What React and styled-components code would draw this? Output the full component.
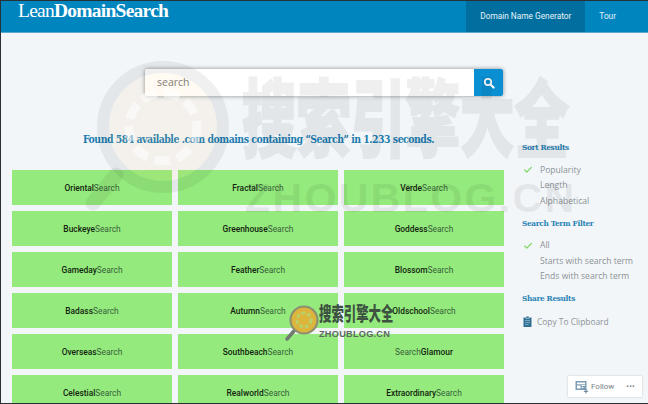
import React from 'react';
import styled, { createGlobalStyle } from 'styled-components';
import { Check } from 'lucide-react';

const domains = [
    ['Oriental', 'Search'], ['Fractal', 'Search'], ['Verde', 'Search'],
    ['Buckeye', 'Search'], ['Greenhouse', 'Search'], ['Goddess', 'Search'],
    ['Gameday', 'Search'], ['Feather', 'Search'], ['Blossom', 'Search'],
    ['Badass', 'Search'], ['Autumn', 'Search'], ['Oldschool', 'Search'],
    ['Overseas', 'Search'], ['Southbeach', 'Search'], ['Glamour', 'Search', true],
    ['Celestial', 'Search'], ['Realworld', 'Search'], ['Extraordinary', 'Search'],
];

const GlobalStyle = createGlobalStyle`
    html, body {
        margin: 0;
        padding: 0;
        height: 404px;
        overflow: hidden;
        background: #f3f6f9;
    }
`;

const Page = styled.div`
    position: relative;
    width: 648px;
    height: 404px;
    box-sizing: border-box;
    overflow: hidden;
    border: solid #2a3034;
    border-width: 1px 0 1px 1px;
    font-family: "Open Sans", sans-serif;
    background: #f3f6f9;
`;

const Header = styled.header`
    height: 31px;
    display: flex;
    justify-content: space-between;
    background: #0085bf;
    border-bottom: 1px solid #5aa9cf;
`;

const Logo = styled.div`
    margin-left: 17px;
    font: 400 19.5px/20px "Liberation Serif", serif;
    letter-spacing: -0.75px;
    color: #fff;
    b { font-weight: 700; }
`;

const Nav = styled.nav`
    display: flex;
    margin-right: 18px;
`;

const NavItem = styled.a`
    display: flex;
    align-items: center;
    justify-content: center;
    height: 31px;
    width: ${props => (props.active ? '119px' : 'auto')};
    padding: 0 14px 1px;
    box-sizing: border-box;
    white-space: nowrap;
    font-family: Roboto, sans-serif;
    font-size: 8.3px;
    color: #e8f4fa;
    background: ${props => (props.active ? '#006f9f' : 'transparent')};
`;

const Main = styled.main`
    display: flex;
`;

const Content = styled.div`
    width: 492px;
    margin-left: 11px;
`;

const SearchBar = styled.div`
    display: flex;
    width: 358px;
    height: 27px;
    margin: 36px 0 0 133px;
    border-radius: 2px;
    box-shadow: 0 0 4px rgba(40, 50, 60, 0.55);
    overflow: hidden;
`;

const SearchInput = styled.div`
    flex: 1;
    display: flex;
    align-items: center;
    padding: 0 0 2px 12px;
    font-size: 10.5px;
    color: #777;
    background: #fff;
`;

const SearchButton = styled.div`
    width: 29px;
    display: flex;
    align-items: center;
    justify-content: center;
    background: #0a8fd2;
`;

const Found = styled.h1`
    margin: 35px 0 0 71px;
    font: 700 10.4px/16px "DejaVu Serif", serif;
    font-stretch: condensed;
    letter-spacing: -0.49px;
    white-space: nowrap;
    color: #1c7db0;
`;

const Grid = styled.div`
    display: grid;
    grid-template-columns: repeat(3, 160px);
    grid-auto-rows: 35px;
    gap: 6px;
    margin-top: 23px;
`;

const Card = styled.div`
    display: flex;
    align-items: center;
    justify-content: center;
    background: #95ea7d;
    font-family: Roboto, sans-serif;
    font-size: 8.4px;
    color: #36603a;
    b { font-weight: 500; color: #12240f; }
`;

const Sidebar = styled.aside`
    margin: 107px 0 0 18px;
    width: 126px;
`;

const SideTitle = styled.h3`
    margin: 0 0 8px;
    font: 700 8.2px/14px "DejaVu Serif", serif;
    font-stretch: condensed;
    letter-spacing: -0.33px;
    white-space: nowrap;
    color: #2a83b5;
`;

const OptionList = styled.div`
    margin-bottom: 7px;
`;

const Option = styled.div`
    position: relative;
    height: 15.5px;
    display: flex;
    align-items: center;
    padding-left: 18px;
    font-size: 8.6px;
    white-space: nowrap;
    color: #8b9296;
`;

const Tick = styled(Check)`
    position: absolute;
    left: 1px;
    top: 3px;
`;

const CopyRow = styled.div`
    display: flex;
    align-items: center;
    gap: 5px;
    height: 16px;
    padding-left: 1px;
    font-size: 8.4px;
    white-space: nowrap;
    color: #8b9296;
`;

const FollowBox = styled.div`
    position: absolute;
    left: 567px;
    top: 375px;
    width: 74px;
    height: 21px;
    display: flex;
    align-items: center;
    box-sizing: border-box;
    padding-left: 7px;
    gap: 2px;
    background: #fff;
    font-family: Roboto, sans-serif;
    font-size: 8px;
    color: #7a8288;
    box-shadow: 0 0 2px rgba(0, 0, 0, 0.2);
`;

const Dots = styled.span`
    margin-left: auto;
    margin-right: 7px;
    font-size: 7px;
    font-weight: 700;
    letter-spacing: 0.4px;
    line-height: 8px;
`;

const BigMark = styled.div`
    position: absolute;
    left: 241px;
    top: 71px;
    pointer-events: none;
    opacity: 0.06;
    color: #000;
`;

const BigMarkCn = styled.div`
    height: 110px;
    font: 900 54.5px/54px "Noto Sans CJK SC", sans-serif;
    white-space: nowrap;
    -webkit-text-stroke: 1.4px #000;
    transform-origin: left top;
    transform: scaleY(1.55);
`;

const BigMarkEn = styled.div`
    font: 700 41px/32px "Liberation Sans", sans-serif;
    letter-spacing: 2.4px;
    white-space: nowrap;
    margin-left: 3px;
`;

const BigLogo = styled.svg`
    position: absolute;
    left: 75px;
    top: 60px;
    pointer-events: none;
`;

const SmallMark = styled.div`
    position: absolute;
    left: 318px;
    top: 300px;
    width: 76px;
    pointer-events: none;
`;

const SmallMarkCn = styled.div`
    height: 28px;
    font: 900 12.4px/16px "Noto Sans CJK SC", sans-serif;
    white-space: nowrap;
    color: #3d5240;
    transform-origin: left top;
    transform: scaleY(1.55);
`;

const SmallMarkEn = styled.div`
    font: 700 9.2px/10px "Liberation Sans", sans-serif;
    letter-spacing: 0.25px;
    white-space: nowrap;
    color: #5a6a5e;
`;

const SmallLogo = styled.svg`
    position: absolute;
    left: 282px;
    top: 303px;
    pointer-events: none;
`;

const SearchIcon = () => (
    <svg width="12" height="12" viewBox="0 0 12 12" fill="none" stroke="#fff">
        <circle cx="5" cy="5" r="3.2" strokeWidth="1.7" />
        <path d="M7.5 7.5L10.5 10.5" strokeWidth="2.2" strokeLinecap="round" />
    </svg>
);

const ClipIcon = () => (
    <svg width="9" height="11" viewBox="0 0 9 11">
        <path d="M0.5 1.5H8.5V11H0.5Z" fill="#2f6f94" />
        <path d="M3 0.3H6V2.5H3Z" fill="#2f6f94" stroke="#f3f6f9" strokeWidth="0.5" />
        <path d="M2 4.5H7M2 6.5H7M2 8.5H5.5" stroke="#9fc0d2" strokeWidth="0.7" />
    </svg>
);

const FollowIcon = () => (
    <svg width="14" height="14" viewBox="0 0 14 14">
        <path d="M0.5 1H11.5V10H0.5Z" fill="#7d9cb5" />
        <path d="M2 2.5H10V4.3H2Z" fill="#fff" />
        <path d="M2 5.5H5.5V8.5H2Z" fill="#fff" />
        <path d="M6.5 5.5H10M6.5 7.5H8.5" stroke="#fff" strokeWidth="0.9" />
        <path d="M11 9V13.5M8.8 11.3H13.2" stroke="#5f7f98" strokeWidth="1" />
    </svg>
);

const App = () => (
    <Page>
        <GlobalStyle />
        <Header>
            <Logo>Lean<b>DomainSearch</b></Logo>
            <Nav>
                <NavItem active>Domain Name Generator</NavItem>
                <NavItem>Tour</NavItem>
            </Nav>
        </Header>
        <Main>
            <Content>
                <SearchBar>
                    <SearchInput>search</SearchInput>
                    <SearchButton><SearchIcon /></SearchButton>
                </SearchBar>
                <Found>Found 584 available .com domains containing “Search” in 1.233 seconds.</Found>
                <Grid>
                    {domains.map(([word, term, termFirst]) => (
                        <Card key={word}>
                            {termFirst ? <>{term}<b>{word}</b></> : <><b>{word}</b>{term}</>}
                        </Card>
                    ))}
                </Grid>
            </Content>
            <Sidebar>
                <SideTitle>Sort Results</SideTitle>
                <OptionList>
                    <Option><Tick size={10} color="#7fd866" strokeWidth={3} />Popularity</Option>
                    <Option>Length</Option>
                    <Option>Alphabetical</Option>
                </OptionList>
                <SideTitle>Search Term Filter</SideTitle>
                <OptionList>
                    <Option><Tick size={10} color="#7fd866" strokeWidth={3} />All</Option>
                    <Option>Starts with search term</Option>
                    <Option>Ends with search term</Option>
                </OptionList>
                <SideTitle>Share Results</SideTitle>
                <CopyRow><ClipIcon />Copy To Clipboard</CopyRow>
            </Sidebar>
        </Main>

        <BigLogo width="165" height="165" viewBox="0 0 165 165">
            <circle cx="87" cy="66" r="54" fill="rgba(250,190,90,0.08)" />
            <circle cx="87" cy="66" r="60" fill="none" stroke="rgba(0,0,0,0.06)" strokeWidth="12" />
            <circle cx="87" cy="66" r="34" fill="none" stroke="rgba(255,255,255,0.5)" strokeWidth="9" strokeDasharray="16 7" />
            <path d="M40 114L17 142" stroke="rgba(0,0,0,0.06)" strokeWidth="15" strokeLinecap="round" />
        </BigLogo>
        <BigMark>
            <BigMarkCn>搜索引擎大全</BigMarkCn>
            <BigMarkEn>ZHOUBLOG.CN</BigMarkEn>
        </BigMark>

        <SmallLogo width="38" height="38" viewBox="0 0 38 38">
            <path d="M11 27L4 35" stroke="#6f7a70" strokeWidth="3.5" strokeLinecap="round" />
            <circle cx="21" cy="16" r="13.5" fill="#dcb53a" stroke="#8d8f72" strokeWidth="2.2" />
            <circle cx="21" cy="16" r="7" fill="none" stroke="#b9cf6a" strokeWidth="3" strokeDasharray="4 2" />
        </SmallLogo>
        <SmallMark>
            <SmallMarkCn>搜索引擎大全</SmallMarkCn>
            <SmallMarkEn>ZHOUBLOG.CN</SmallMarkEn>
        </SmallMark>

        <FollowBox>
            <FollowIcon />Follow<Dots>•••</Dots>
        </FollowBox>
    </Page>
);

export default App;
